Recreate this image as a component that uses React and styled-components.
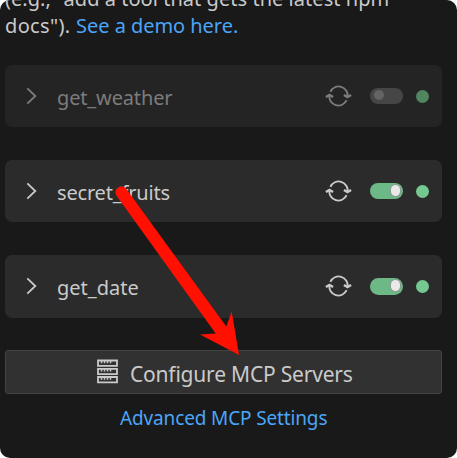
import React from "react";
import styled, { createGlobalStyle } from "styled-components";

const GlobalStyle = createGlobalStyle`
  * { box-sizing: border-box; }
  body { margin: 0; background: #fff; overflow: hidden; }
`;

const Panel = styled.main`
  position: relative;
  width: 457px;
  height: 458px;
  padding: 0 15px 0 5px;
  overflow: hidden;
  border-radius: 10px;
  background: #191919;
  color: #cacaca;
  font-family: "Segoe UI", "Noto Sans", sans-serif;
  font-size: 20px;
  display: flex;
  flex-direction: column;
`;

const Intro = styled.div`
  height: 65px;
  flex: none;
`;

const Line = styled.div`
  height: 27px;
  line-height: 27px;
  margin-top: ${(p) => p.$shift || 0}px;
  letter-spacing: ${(p) => p.$spacing}px;
  white-space: nowrap;
`;

const Link = styled.a`
  color: #4ba5f8;
  letter-spacing: ${(p) => p.$spacing}px;
`;

const ServerList = styled.div`
  display: flex;
  flex-direction: column;
  gap: 33px;
`;

const ServerRow = styled.div`
  display: flex;
  align-items: center;
  height: ${(p) => p.$height}px;
  padding: 0 13px 0 20px;
  border-radius: 7px;
  background: ${(p) => (p.$off ? "#242424" : "#2b2b2b")};
  color: ${(p) => (p.$off ? "#7c7c7c" : "#cacaca")};
`;

const Name = styled.span`
  flex: 1;
  margin-left: 19px;
  padding-top: ${(p) => (p.$tall ? 2 : 4)}px;
  line-height: 30px;
  letter-spacing: ${(p) => p.$spacing}px;
`;

const Toggle = styled.span`
  display: flex;
  align-items: center;
  justify-content: ${(p) => (p.$off ? "flex-start" : "flex-end")};
  width: 33px;
  height: ${(p) => (p.$tall ? 17 : 16)}px;
  margin: 0 13px 0 18px;
  padding: 0 3px 2px 4px;
  border-radius: 9px;
  background: ${(p) => (p.$off ? "#464646" : "#6cb987")};
`;

const Knob = styled.span`
  width: ${(p) => (p.$off ? 10 : 9)}px;
  height: ${(p) => (p.$off ? 10 : 11)}px;
  border-radius: 5px;
  background: ${(p) => (p.$off ? "#646464" : "#e9e9e9")};
  box-shadow: ${(p) => (p.$off ? "none" : "0 0 0 1px #8c9a91")};
`;

const Status = styled.span`
  width: 13px;
  height: 13px;
  border-radius: 50%;
  background: ${(p) => (p.$off ? "#508560" : "#74c991")};
`;

const ConfigureButton = styled.button`
  display: flex;
  align-items: center;
  height: 44px;
  flex: none;
  margin-top: 32px;
  padding: 0 0 0 91px;
  border: 1px solid #434343;
  border-radius: 3px;
  background: #313131;
  color: #cacaca;
  font: inherit;
  font-size: 21px;
  letter-spacing: ${(p) => p.$spacing}px;
`;

const ButtonLabel = styled.span`
  margin: 3px 0 0 12px;
  white-space: nowrap;
`;

const Footer = styled.div`
  padding: 10px 0 0 115px;
  font-size: 19px;
  line-height: 28px;
  white-space: nowrap;
`;

const Icon = styled.svg`
  display: block;
  flex: none;
  fill: none;
  stroke: currentColor;
  margin-top: ${(p) => p.$shift || 0}px;
`;

const Arrow = styled.svg`
  position: absolute;
  inset: 0;
  pointer-events: none;
`;

function Server({ name, off, spacing, tall }) {
  return (
    <ServerRow $off={off} $height={tall ? 63 : 62}>
      <Icon width="13" height="20" viewBox="0 0 13 20" strokeWidth="1.8" $shift={-1}>
        <path d="M2.3 2.4 10.3 10 2.3 17.6" />
      </Icon>
      <Name $spacing={spacing} $tall={tall}>{name}</Name>
      <Icon width="27" height="22" viewBox="0 0 27 22" strokeWidth="1.9" $shift={tall ? -1 : 0}>
        <path d="M5.4 6.8A9 9 0 0 1 22.5 12M21.6 15.2A9 9 0 0 1 4.5 10" />
        <path d="M18.9 9.9 22.5 12.1 26.1 9.9M.9 12.1 4.5 9.9 8.1 12.1" strokeWidth="2.3" />
      </Icon>
      <Toggle $off={off} $tall={tall}><Knob $off={off} /></Toggle>
      <Status $off={off} />
    </ServerRow>
  );
}

export default function App() {
  return (
    <>
      <GlobalStyle />
      <Panel>
        <Intro>
          <Line $shift={-15} $spacing={0.04}>(e.g., "add a tool that gets the latest npm</Line>
          <Line $spacing={0.35}>docs"). <Link $spacing={-0.05}>See a demo here.</Link></Line>
        </Intro>
        <ServerList>
          <Server name="get_weather" off spacing={-0.15} />
          <Server name="secret_fruits" spacing={-0.18} />
          <Server name="get_date" spacing={0} tall />
        </ServerList>
        <ConfigureButton $spacing={-0.2}>
          <Icon width="21" height="25" viewBox="0 0 21 25" strokeWidth="1.8" $shift={-2}>
            <path d="M1 1.5h19v5.4H1zM1 9.8h19v5.4H1zM1 18h19v5.4H1z" />
            <path d="M4.5 2v2.2M7.5 2v2.2M10.5 2v2.2M13.5 2v2.2M4.5 10v2.4M7.5 10v2.4M10.5 10v2.4M13.5 10v2.4M4.5 18.5v2.2M7.5 18.5v2.2M10.5 18.5v2.2M13.5 18.5v2.2" strokeWidth="1.5" />
          </Icon>
          <ButtonLabel>Configure MCP Servers</ButtonLabel>
        </ConfigureButton>
        <Footer><Link $spacing={-0.14}>Advanced MCP Settings</Link></Footer>
        <Arrow width="457" height="458" viewBox="0 0 457 458">
          <path d="M116.2 195.2A6 6 0 0 1 126 188.5L226.3 326.5 231.7 311.5 239 355 200 334.5 215.7 333.5Z" fill="#ff1000" />
        </Arrow>
      </Panel>
    </>
  );
}
